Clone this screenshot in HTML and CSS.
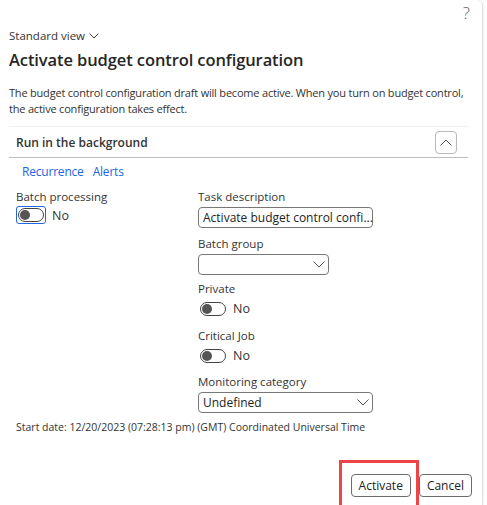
FILE: index.html
```html
<!DOCTYPE html>
<html>
<head>
<meta charset="utf-8">
<link rel="stylesheet" href="styles.css">
</head>
<body>
<div class="panel">
  <div class="topbar"><span class="help">?</span></div>
  <div class="view">Standard view <svg class="chev" width="10" height="6" viewBox="0 0 10 6"><path d="M0.5 0.5 L5 5 L9.5 0.5" fill="none" stroke="#444" stroke-width="1"/></svg></div>
  <h1 class="title">Activate budget control configuration</h1>
  <p class="desc">The budget control configuration draft will become active. When you turn on budget control, the active configuration takes effect.</p>

  <div class="section">
    <div class="sec-head">
      <span class="sec-title">Run in the background</span>
      <button class="collapse"><svg width="12" height="7" viewBox="0 0 12 7"><path d="M0.5 6.5 L6 1 L11.5 6.5" fill="none" stroke="#555" stroke-width="1"/></svg></button>
    </div>
    <div class="tabs"><span class="link">Recurrence</span><span class="link">Alerts</span></div>
    <div class="cols">
      <div class="col-left">
        <div class="label">Batch processing</div>
        <div class="toggle-row">
          <span class="focus"><span class="toggle"><span class="knob"></span></span></span>
          <span class="val">No</span>
        </div>
      </div>
      <div class="col-right">
        <div class="field">
          <div class="label">Task description</div>
          <div class="input wide">Activate budget control confi...</div>
        </div>
        <div class="field f-batch">
          <div class="label">Batch group</div>
          <div class="input narrow select"><span></span><svg width="12" height="7" viewBox="0 0 12 7"><path d="M0.5 0.5 L6 6 L11.5 0.5" fill="none" stroke="#555" stroke-width="1"/></svg></div>
        </div>
        <div class="field f-private">
          <div class="label">Private</div>
          <div class="toggle-row small"><span class="toggle"><span class="knob"></span></span><span class="val">No</span></div>
        </div>
        <div class="field f-critical">
          <div class="label">Critical Job</div>
          <div class="toggle-row small"><span class="toggle"><span class="knob"></span></span><span class="val">No</span></div>
        </div>
        <div class="field f-monitor">
          <div class="label">Monitoring category</div>
          <div class="input wide select"><span>Undefined</span><svg width="12" height="7" viewBox="0 0 12 7"><path d="M0.5 0.5 L6 6 L11.5 0.5" fill="none" stroke="#555" stroke-width="1"/></svg></div>
        </div>
      </div>
    </div>
    <div class="start">Start date: 12/20/2023 (07:28:13 pm) (GMT) Coordinated Universal Time</div>
  </div>

  <div class="footer">
    <span class="hl"><button class="btn">Activate</button></span>
    <button class="btn">Cancel</button>
  </div>
</div>
</body>
</html>
```

FILE: styles.css
```css
html, body {
  margin: 0;
  padding: 0;
  background: #fff;
}
body {
  font-family: "Open Sans", "Noto Sans", Arial, sans-serif;
  color: #2b2b2b;
  font-size: 12px;
}
.panel {
  width: 483px;
  height: 505px;
  box-sizing: border-box;
  border-right: 1px solid #e2e2e2;
  border-top-right-radius: 6px;
  box-shadow: 1px 0 2px rgba(0,0,0,0.06);
  padding-left: 9px;
  position: relative;
  overflow: hidden;
}
.topbar {
  height: 28px;
  display: flex;
  justify-content: flex-end;
  padding-right: 12px;
}
.help {
  font-size: 17px;
  font-weight: 300;
  color: #666;
  line-height: 26px;
}
.view {
  font-size: 11.5px;
  color: #333;
  height: 16px;
  line-height: 16px;
  display: flex;
  align-items: center;
  gap: 4px;
}
.chev { margin-top: -1px; }
.title {
  margin: 5px 0 0 0;
  font-size: 16.5px;
  font-weight: 600;
  color: #262626;
  line-height: 22px;
  letter-spacing: -0.1px;
}
.desc {
  margin: 14px 0 0 0;
  font-size: 11px;
  line-height: 15.5px;
  color: #333;
  width: 458px;
  letter-spacing: -0.2px;
}
.section {
  margin-top: 10px;
  border-top: 1px solid #f0f0f0;
  width: 459px;
}
.sec-head {
  height: 30px;
  display: flex;
  align-items: center;
  justify-content: space-between;
  border-bottom: 1px solid #bdbdbd;
  padding: 0 11px 0 7px;
}
.sec-title {
  font-weight: 600;
  font-size: 12px;
  color: #333;
}
.collapse {
  width: 22px;
  height: 23px;
  border: 1px solid #b9b9b9;
  border-radius: 4px;
  background: #fff;
  padding: 0;
  display: flex;
  align-items: center;
  justify-content: center;
}
.tabs {
  display: flex;
  gap: 9px;
  padding: 6px 0 0 13px;
  height: 16px;
  line-height: 16px;
}
.link {
  color: #2266e3;
  font-size: 12px;
  letter-spacing: -0.2px;
}
.cols {
  display: flex;
  margin-top: 10px;
  padding-left: 7px;
}
.col-left { width: 182px; }
.col-right { display: flex; flex-direction: column; }
.f-batch { margin-top: 9px; }
.f-private { margin-top: 7px; }
.f-critical { margin-top: 12px; }
.f-monitor { margin-top: 11px; }
.label {
  font-size: 11.5px;
  line-height: 14px;
  color: #333;
}
.toggle-row {
  display: flex;
  align-items: center;
  gap: 6px;
  margin-top: 2px;
}
.focus {
  border: 1px solid #2266e3;
  border-radius: 3px;
  padding: 1px;
  display: inline-flex;
}
.toggle {
  width: 22px;
  height: 12px;
  border: 1px solid #444;
  border-radius: 7px;
  display: inline-flex;
  align-items: center;
  padding: 0 1px;
}
.knob {
  width: 10px;
  height: 10px;
  border-radius: 50%;
  background: #555;
}
.val { font-size: 12.5px; color: #333; }
.toggle-row.small { margin-top: 4px; padding-left: 2px; gap: 7px; }
.input {
  margin-top: 3px;
  height: 21px;
  box-sizing: border-box;
  border: 1px solid #777;
  border-radius: 4px;
  padding: 0 4px;
  display: flex;
  align-items: center;
  font-size: 12px;
  color: #222;
  white-space: nowrap;
}
.wide { width: 175px; }
.narrow { width: 131px; }
.select { justify-content: space-between; padding-right: 3px; }
.start {
  margin-top: 7px;
  padding-left: 7px;
  font-size: 10.5px;
  color: #333;
}
.footer {
  position: absolute;
  right: 10px;
  top: 460px;
  display: flex;
  align-items: flex-start;
  gap: 0;
}
.hl {
  border: 3px solid #ee4447;
  padding: 11px 5px 10px 9px;
  margin-right: 0;
}
.btn {
  font-family: inherit;
  font-size: 12px;
  color: #222;
  background: #fff;
  border: 1px solid #6b6b6b;
  border-radius: 4px;
  height: 23px;
  padding: 0 7px;
  line-height: 20px;
}
.footer > .btn { margin-top: 14px; }
```
